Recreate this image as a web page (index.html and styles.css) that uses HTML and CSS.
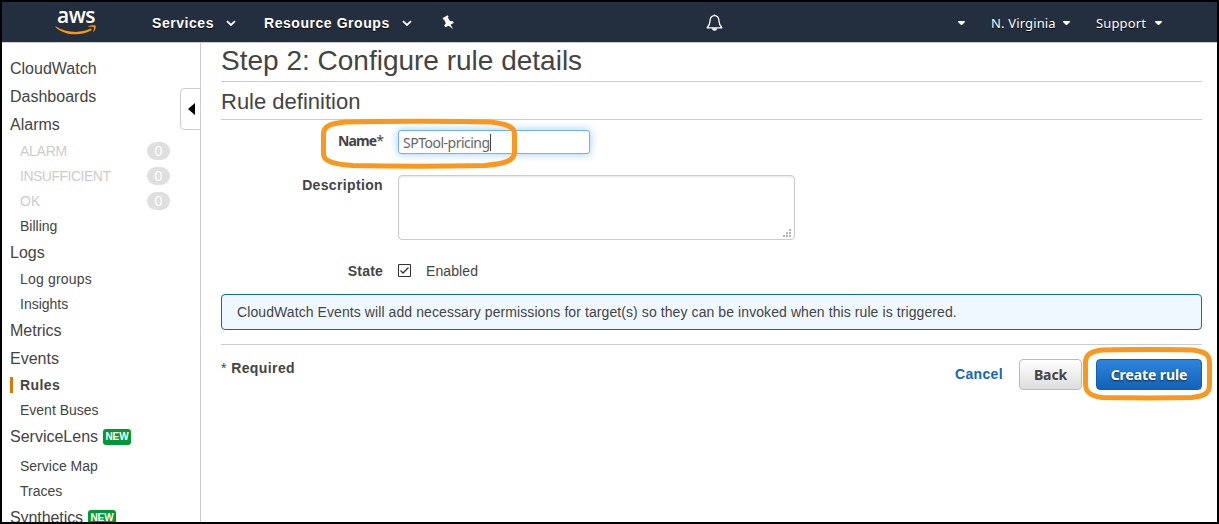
FILE: index.html
```html
<!DOCTYPE html>
<html lang="en">
<head>
<meta charset="utf-8">
<title>CloudWatch - Configure rule details</title>
<link rel="stylesheet" href="styles.css">
</head>
<body>
<div class="frame">
  <header class="topbar">
    <div class="logo">
      <span class="logo-text">aws</span>
      <svg class="logo-smile" width="42" height="10" viewBox="0 0 42 10"><path d="M0.4 1.2C11 8.2 26 8.4 35.5 3.6L37 4.9C27 11 10 11.3 0.2 1.9z" fill="#f90"/><path d="M32.8 1.9C35.3.1 39.3 0 40.6.7C41.3 2.6 39.8 6 37.8 7.6C38.6 5.4 39.4 3.2 38.8 2.3C38 1.5 35.6 1.7 32.8 1.9z" fill="#f90"/></svg>
    </div>
    <nav class="nav-main">
      <a class="nav-item services">Services</a>
      <svg class="chev" width="10" height="7" viewBox="0 0 10 7"><path d="M1 1.2L5 5L9 1.2" fill="none" stroke="#fff" stroke-width="1.8"/></svg>
      <a class="nav-item groups">Resource Groups</a>
      <svg class="chev" width="10" height="7" viewBox="0 0 10 7"><path d="M1 1.2L5 5L9 1.2" fill="none" stroke="#fff" stroke-width="1.8"/></svg>
      <svg class="pin" width="13" height="15" viewBox="0 0 13 15"><path d="M0.6 3L5.8.3L6.500 1.600L5.900 2.700L8 6L10.900 6.300L11.800 8L8.600 9.600L11 14L6.700 10.800L3.200 12.200L2.300 10.500L3.800 8.200L2.200 4.700L1.100 4.500z" fill="#fff"/></svg>
    </nav>
    <svg class="bell" width="17" height="18" viewBox="0 0 17 18"><path d="M8.5 1.6C5.2 1.6 4.1 4.2 4 7C3.9 10.5 3.2 11.6 1.2 13.8H15.8C13.8 11.6 13.1 10.5 13 7C12.9 4.2 11.8 1.6 8.5 1.6z" fill="none" stroke="#fff" stroke-width="1.3" stroke-linejoin="round"/><path d="M7.4 1.5a1.1 1.1 0 0 1 2.2 0zM6 14.2h5a2.5 2.5 0 0 1-5 0z" fill="#fff"/></svg>
    <nav class="nav-side">
      <svg class="tri" width="7" height="4" viewBox="0 0 7 4"><path d="M0 0H7V1L4 4H3L0 1z" fill="#fff"/></svg>
      <a class="region">N. Virginia</a>
      <svg class="tri" width="7" height="4" viewBox="0 0 7 4"><path d="M0 0H7V1L4 4H3L0 1z" fill="#fff"/></svg>
      <a class="support">Support</a>
      <svg class="tri" width="7" height="4" viewBox="0 0 7 4"><path d="M0 0H7V1L4 4H3L0 1z" fill="#fff"/></svg>
    </nav>
  </header>
  <div class="body">
    <aside class="sidebar">
      <a class="item">CloudWatch</a>
      <a class="item">Dashboards</a>
      <a class="item">Alarms</a>
      <a class="sub muted"><span class="alarm">ALARM</span><b class="count">0</b></a>
      <a class="sub muted"><span class="insufficient">INSUFFICIENT</span><b class="count">0</b></a>
      <a class="sub muted"><span>OK</span><b class="count">0</b></a>
      <a class="sub">Billing</a>
      <a class="item">Logs</a>
      <a class="sub log-groups">Log groups</a>
      <a class="sub">Insights</a>
      <a class="item">Metrics</a>
      <a class="item">Events</a>
      <a class="sub active">Rules</a>
      <a class="sub">Event Buses</a>
      <a class="item tall">ServiceLens<b class="new">NEW</b></a>
      <a class="sub">Service Map</a>
      <a class="sub">Traces</a>
      <a class="item synthetics">Synthetics<b class="new">NEW</b></a>
      <div class="collapse"><svg width="7" height="12" viewBox="0 0 7 12"><path d="M7 0V12L0 6z" fill="#000"/></svg></div>
    </aside>
    <main class="content">
      <h1>Step 2: Configure rule details</h1>
      <h2>Rule definition</h2>
      <form class="form">
        <div class="row name-row">
          <label class="label name-label">Name<span class="star">*</span></label>
          <div class="field"><input class="text-input" type="text" value="SPTool-pricing"><i class="caret"></i></div>
          <svg class="mark" width="198" height="52" viewBox="0 0 198 52"><path d="M24 4C60 3 140 3 170 4C186 6 193.500 9 193.500 16V34C193.500 43 184 45.500 164 47.500C120 48.500 70 48.500 32 47.500C12 46.500 2.500 43 2.500 36V16C2.500 8 10 5.500 24 4z"/></svg>
        </div>
        <div class="row desc-row">
          <label class="label desc-label">Description</label>
          <div class="field"><textarea class="text-area"></textarea>
            <svg class="grip" width="8" height="8" viewBox="0 0 8 8"><path d="M6 0h2v2H6zM3 3h2v2H3zM6 3h2v2H6zM0 6h2v2H0zM3 6h2v2H3zM6 6h2v2H6z" fill="#b5b5b5"/></svg></div>
        </div>
        <div class="row state-row">
          <label class="label">State</label>
          <svg class="check" width="13" height="13" viewBox="0 0 13 13"><path d="M.5.5H12.500V12.500H.5z" fill="#fff" stroke="#333"/><path d="M2.500 6.500L5 9L10.500 3.500" fill="none" stroke="#333" stroke-width="1.3"/></svg>
          <span class="enabled">Enabled</span>
        </div>
      </form>
      <div class="notice"><span>CloudWatch Events will add necessary permissions for target(s) so they can be invoked when this rule is triggered.</span></div>
      <div class="footer">
        <div class="required"><span>*</span> <b>Required</b></div>
        <div class="actions">
          <a class="cancel">Cancel</a>
          <button class="btn back">Back</button>
          <div class="create-wrap">
            <button class="btn create">Create rule</button>
            <svg class="mark mark-create" width="130" height="56" viewBox="0 0 130 56"><path d="M18 4C50 3.500 85 3.500 108 4C122 5.500 125.500 9 125.500 17V38C125.500 47 122 50 108 51.500C85 52 45 52 18 51.500C6 50 1.500 46 1.500 38V17C1.500 9 6 5.500 18 4z"/></svg>
          </div>
        </div>
      </div>
    </main>
  </div>
</div>
</body>
</html>
```

FILE: styles.css
```css
* { box-sizing: border-box; }
body { margin: 0; font-family: "Liberation Sans", Arial, sans-serif; font-size: 14px; color: #444; background: #fff; }
svg { display: block; flex: none; }
.frame { width: 1219px; height: 524px; border: 2px solid #000; overflow: hidden; display: flex; flex-direction: column; }
.topbar { height: 41px; flex: none; background: #232f3e; border-bottom: 1px solid #ccc; display: flex; align-items: center; color: #fff; text-shadow: 0 1px 0 #000; }
.logo { width: 42px; height: 29px; margin-left: 53px; flex: none; display: flex; flex-direction: column; align-items: center; }
.logo-text { font: 600 21px/17px "Open Sans", sans-serif; height: 19px; margin-top: -1px; margin-bottom: -1px; letter-spacing: -0.5px; text-shadow: none; }
.nav-main { display: flex; align-items: center; margin-left: 55px; width: 540px; flex: none; }
.nav-item { font-weight: bold; white-space: nowrap; line-height: 20px; padding-top: 1px; }
.services { width: 62px; letter-spacing: .55px; }
.nav-main .chev { margin-left: 12px; margin-top: 2px; }
.groups { margin-left: 28px; width: 127px; letter-spacing: .55px; }
.nav-main .groups + .chev { margin-left: 11px; }
.pin { margin-left: 30px; }
.bell { margin-left: 14px; margin-top: 1px; }
.nav-side { margin-left: 235px; display: flex; align-items: center; font: 13px/20px "Noto Sans", sans-serif; white-space: nowrap; padding-top: 2px; letter-spacing: .15px; }
.tri { margin-top: -1px; }
.region { margin-left: 26px; width: 64px; }
.support { margin-left: 26px; width: 49px; }
.nav-side .support + .tri { margin-left: 10px; }
.nav-side .region + .tri { margin-left: 8px; }
.body { flex: 1; min-height: 0; display: flex; }
.sidebar { position: relative; width: 199px; flex: none; border-right: 1px solid #ccc; padding-top: 11px; display: flex; flex-direction: column; overflow: hidden; }
.item { height: 28px; flex: none; display: flex; align-items: center; padding: 2px 0 0 8px; font-size: 16px; }
.item.tall { height: 31px; padding: 0 0 2px 8px; }
.synthetics { letter-spacing: -.08px; }
.sub { height: 25px; flex: none; display: flex; align-items: center; padding-left: 18px; }
.muted { color: #ccc; justify-content: space-between; padding-right: 30px; letter-spacing: 0; }
.alarm { letter-spacing: -.25px; }
.insufficient { letter-spacing: -.5px; }
.log-groups { letter-spacing: .18px; }
.count { width: 23px; height: 18px; border-radius: 9px; background: #dfdfdf; color: #fff; font-size: 14px; line-height: 18px; text-align: center; font-weight: normal; }
.active { font-weight: bold; border-left: 3px solid #e07700; height: 16px; margin: 5px 0 4px 8px; padding-left: 7px; letter-spacing: .4px; }
.new { margin-left: 5px; width: 28px; height: 16px; border-radius: 3px; background: #093; color: #fff; font-size: 10px; line-height: 16px; text-align: center; }
.collapse { position: absolute; left: 178px; top: 45px; width: 21px; height: 42px; border: 1px solid #ccc; border-right: 0; border-radius: 5px 0 0 5px; background: #fff; display: flex; align-items: center; padding-left: 7px; }
.content { flex: 1; padding: 0 15px 0 20px; }
h1 { margin: 0; height: 39px; border-bottom: 1px solid #ccc; font-size: 28px; font-weight: normal; line-height: 36px; }
h2 { margin: 0; height: 38px; border-bottom: 1px solid #ccc; font-size: 22px; font-weight: normal; line-height: 39px; }
.form { margin: 0; height: 174px; }
.row { position: relative; display: flex; }
.label { width: 162px; text-align: right; font-weight: bold; line-height: 20px; margin-right: 15px; letter-spacing: .2px; flex: none; }
.desc-label { letter-spacing: .35px; }
.field { position: relative; height: max-content; }
.name-row { padding-top: 10px; height: 55px; }
.name-label { font: bold 14px/22px "Noto Sans", sans-serif; letter-spacing: -.9px; }
.star { font-weight: normal; }
.text-input { display: block; width: 192px; height: 24px; border: 1px solid #6eb4ee; border-radius: 3px; padding: 0 4px; color: #666; font: 14px/22px "Noto Sans", sans-serif; letter-spacing: -.5px; outline: none; box-shadow: 0 0 8px rgba(82,168,236,.6); }
.caret { position: absolute; left: 92px; top: 4px; width: 1px; height: 17px; background: #444; }
.mark { position: absolute; left: 100px; top: -2px; overflow: visible; }
.mark path { fill: none; stroke: #fa981d; stroke-width: 5; }
.text-area { display: block; width: 397px; height: 65px; border: 1px solid #ccc; border-radius: 4px; resize: none; background: #fff; box-shadow: inset 0 1px 2px rgba(0,0,0,.1); }
.grip { position: absolute; right: 4px; bottom: 3px; }
.desc-row { height: 86px; }
.state-row { align-items: center; height: 20px; }
.check { margin-top: -2px; }
.enabled { margin-left: 15px; letter-spacing: .1px; }
.notice { height: 36px; border: 1px solid #1166bb; border-radius: 4px; background: #f0f8ff; padding-left: 15px; line-height: 34px; white-space: nowrap; letter-spacing: .086px; }
.footer { margin-top: 14px; border-top: 1px solid #ccc; padding-top: 14px; display: flex; justify-content: space-between; }
.required { line-height: 18px; letter-spacing: .4px; }
.actions { display: flex; align-items: center; }
.cancel { color: #1166bb; font-weight: bold; margin-right: 16px; padding-bottom: 2px; letter-spacing: .35px; }
.btn { display: block; height: 31px; border-radius: 4px; padding: 0; font: bold 14px/29px "Noto Sans", sans-serif; letter-spacing: -.1px; }
.back { width: 63px; color: #444; border: 1px solid #bbb; background: linear-gradient(#fff, #ddd); margin-right: 14px; }
.create-wrap { position: relative; }
.create { width: 106px; color: #fff; border: 1px solid #1160b4; background: linear-gradient(#2e85de, #1262b8); text-shadow: 0 1px 2px #123; }
.mark-create { left: -12px; top: -13px; }
```
